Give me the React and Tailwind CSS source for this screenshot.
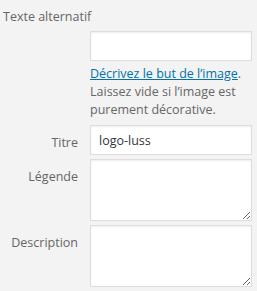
export default function App() {
  const font = { fontFamily: '"Open Sans", "Noto Sans", sans-serif' };
  return (
    <div className="w-[257px] h-[291px] bg-[#f3f3f3] overflow-hidden text-[12.5px] text-[#666]" style={font}>
      {/* Alt text */}
      <div className="pt-[8px] pl-[3px] leading-[18px]">Texte alternatif</div>
      <div className="flex mt-[5px]">
        <div className="w-[90px] shrink-0" />
        <div className="w-[162px]">
          <input
            type="text"
            className="block w-full h-[30px] bg-white border border-[#ddd] shadow-[inset_0_1px_2px_rgba(0,0,0,0.07)] outline-none"
          />
          <p className="mt-[4px] leading-[18px] text-[12.5px]">
            <a href="#" className="text-[#0073aa] underline">Décrivez le but de l’image</a>.
            <br />
            Laissez vide si l’image est purement décorative.
          </p>
        </div>
      </div>

      {/* Titre */}
      <div className="flex mt-[6px]">
        <label className="w-[78px] shrink-0 text-right pt-[9px] leading-[18px]">Titre</label>
        <div className="w-[162px] ml-[12px]">
          <input
            type="text"
            defaultValue="logo-luss"
            className="block w-full h-[30px] bg-white border border-[#ddd] px-[8px] text-[12.5px] text-[#32373c] shadow-[inset_0_1px_2px_rgba(0,0,0,0.07)] outline-none"
            style={font}
          />
        </div>
      </div>

      {/* Légende */}
      <div className="flex mt-[4px]">
        <label className="w-[78px] shrink-0 text-right pt-[9px] leading-[18px]">Légende</label>
        <div className="w-[162px] ml-[12px]">
          <textarea className="block w-full h-[62px] bg-white border border-[#ddd] shadow-[inset_0_1px_2px_rgba(0,0,0,0.07)] outline-none" />
        </div>
      </div>

      {/* Description */}
      <div className="flex mt-[4px]">
        <label className="w-[78px] shrink-0 text-right pt-[9px] leading-[18px]">Description</label>
        <div className="w-[162px] ml-[12px]">
          <textarea className="block w-full h-[62px] bg-white border border-[#ddd] shadow-[inset_0_1px_2px_rgba(0,0,0,0.07)] outline-none" />
        </div>
      </div>
    </div>
  );
}
